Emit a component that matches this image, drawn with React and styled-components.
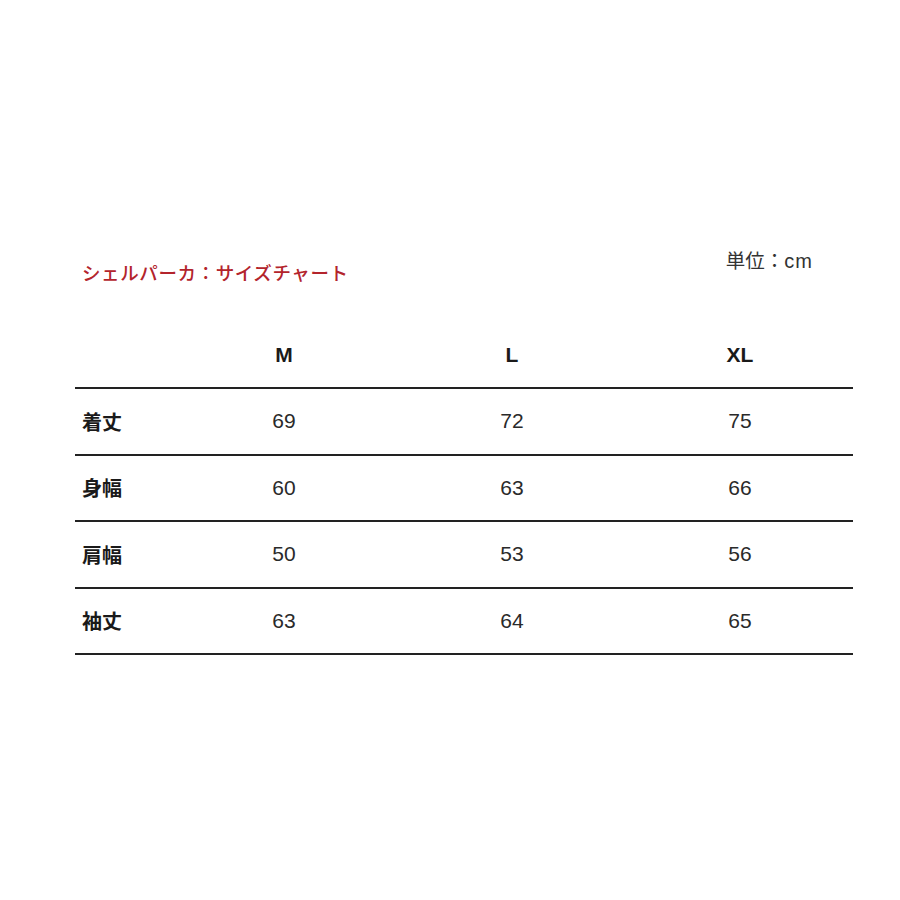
import React from 'react'
import styled, { createGlobalStyle } from 'styled-components'

const GlobalStyle = createGlobalStyle`
    html, body {
        margin: 0;
        padding: 0;
        background: #ffffff;
    }
    body {
        font-family: "Liberation Sans", "Noto Sans CJK JP", sans-serif;
        color: #222222;
    }
`

const sizes = ['M', 'L', 'XL']

const rows = [
    { label: '着丈', values: [69, 72, 75] },
    { label: '身幅', values: [60, 63, 66] },
    { label: '肩幅', values: [50, 53, 56] },
    { label: '袖丈', values: [63, 64, 65] },
]

const App = () => {
    return (
        <Page>
            <GlobalStyle />
            <TopBar>
                <Title>シェルパーカ：サイズチャート</Title>
                <Unit>単位：<Latin>cm</Latin></Unit>
            </TopBar>
            <Table>
                <Row header>
                    <LabelCell />
                    {sizes.map(s => (
                        <HeadCell key={s}>{s}</HeadCell>
                    ))}
                </Row>
                {rows.map(r => (
                    <Row key={r.label}>
                        <LabelCell>{r.label}</LabelCell>
                        {r.values.map((v, i) => (
                            <ValueCell key={i}>{v}</ValueCell>
                        ))}
                    </Row>
                ))}
            </Table>
        </Page>
    )
}

const Page = styled.div`
    width: 900px;
    height: 900px;
    box-sizing: border-box;
    padding: 248px 47px 0 75px;
`

const TopBar = styled.div`
    display: flex;
    justify-content: space-between;
    align-items: flex-start;
    padding: 0 40px 0 7px;
`

const Title = styled.div`
    margin-top: 12px;
    font-family: "Noto Sans CJK JP", sans-serif;
    font-size: 18.5px;
    font-weight: 500;
    line-height: 24px;
    color: #b3242c;
    letter-spacing: 0.6px;
`

const Unit = styled.div`
    font-family: "Noto Sans CJK JP", sans-serif;
    font-size: 19.5px;
    line-height: 24px;
    color: #333333;
`

const Latin = styled.span`
    font-family: "Liberation Sans", sans-serif;
    font-size: 20px;
    letter-spacing: 1px;
`

const Table = styled.div`
    margin-top: 38px;
    display: flex;
    flex-direction: column;
`

const Row = styled.div`
    display: grid;
    grid-template-columns: 95px 228px 228px 228px;
    align-items: center;
    height: ${p => (p.header ? '65px' : '64.5px')};
    border-bottom: 2px solid #222222;
`

const LabelCell = styled.div`
    padding-left: 7px;
    font-family: "Noto Sans CJK JP", sans-serif;
    font-size: 20px;
    font-weight: 700;
    color: #1a1a1a;
`

const HeadCell = styled.div`
    text-align: center;
    font-size: 21px;
    font-weight: 700;
    color: #1a1a1a;
`

const ValueCell = styled.div`
    text-align: center;
    font-size: 21px;
    color: #2a2a2a;
`

export default App
